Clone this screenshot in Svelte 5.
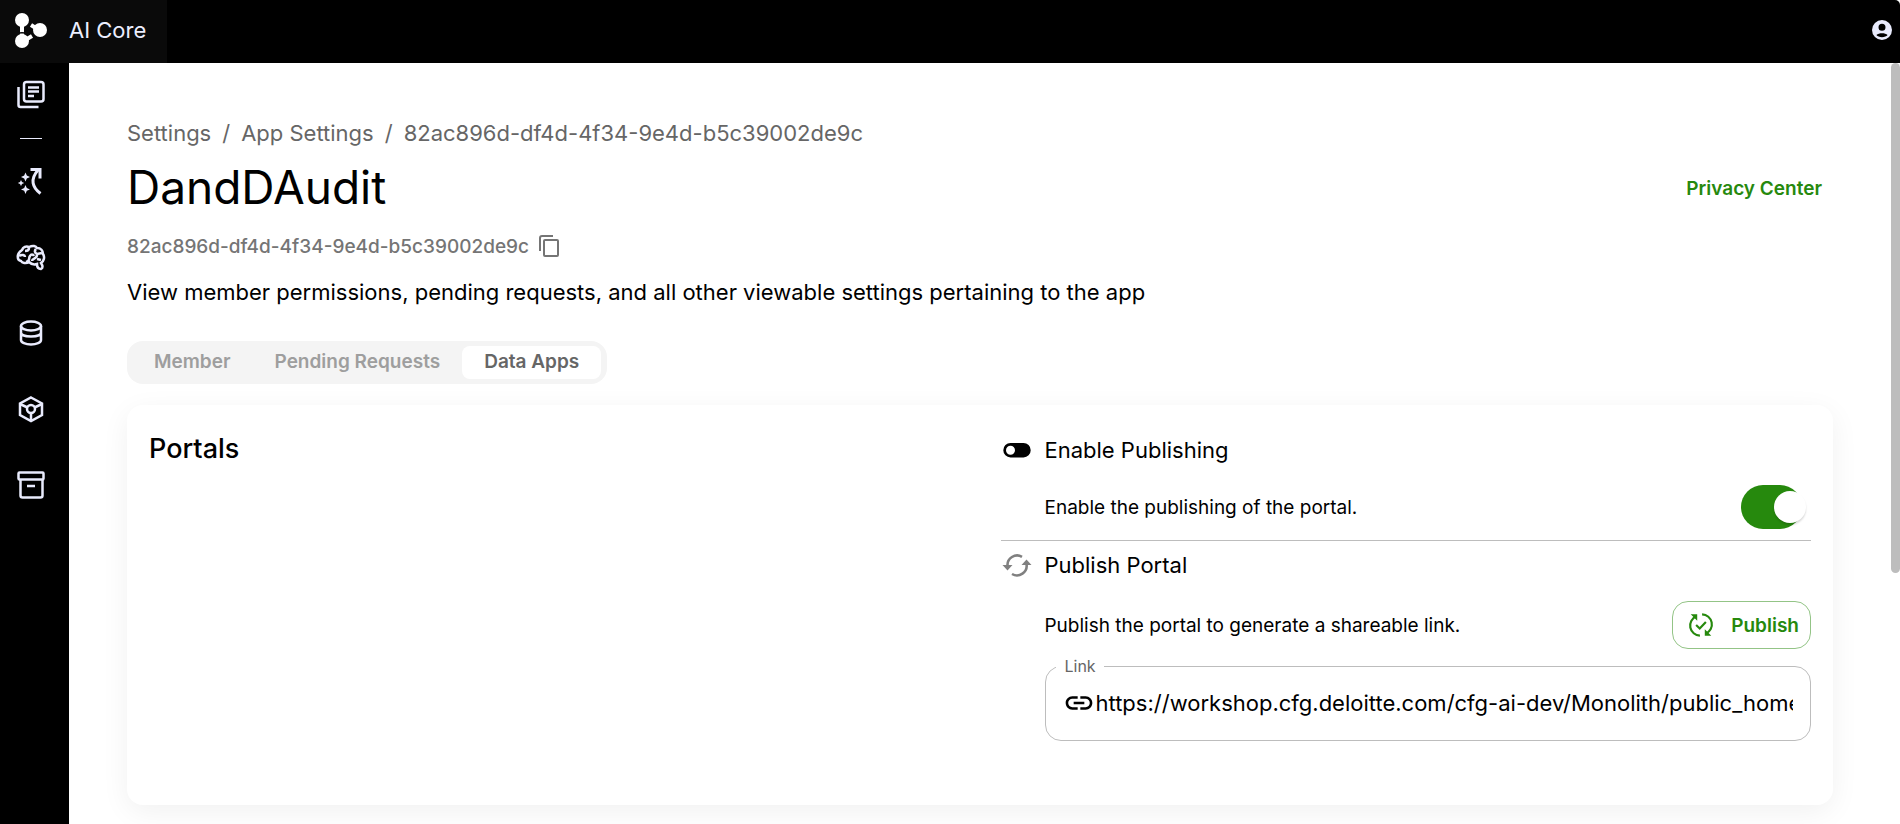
<script>
  let published = $state(true);
  let link = $state('https://workshop.cfg.deloitte.com/cfg-ai-dev/Monolith/public_home/82ac896d-df4d-4f34-9e4d-b5c39002de9c/portals/');
  let active = $state('Data Apps');
  const tabs = ['Member', 'Pending Requests', 'Data Apps'];
  const id = '82ac896d-df4d-4f34-9e4d-b5c39002de9c';
</script>

<div class="app">
  <header>
    <a class="brand" href="#home">
      <svg width="34" height="38" viewBox="0 0 34 38" fill="#fff" stroke="#fff">
        <g stroke-width="4"><path d="M9 9v12.500M9 22.500v6M9 31l10-6M18 14l8 5" /></g>
        <g stroke="none"><circle cx="9" cy="9" r="7" /><circle cx="27" cy="19" r="7" /><circle cx="9" cy="30" r="7" /></g>
        <path d="M3 22.500Q9 20.500 15 22.500" fill="none" stroke="#0a0a0a" stroke-width="1" />
      </svg>
      <span>AI Core</span>
    </a>
    <button class="account" aria-label="Account">
      <svg width="24" height="24" viewBox="0 0 24 24" fill="#e9ebfd">
        <path fill-rule="evenodd" d="M12 2a10 10 0 1 0 0 20 10 10 0 0 0 0-20zm0 3.800a3.500 3.500 0 1 1 0 7 3.500 3.500 0 0 1 0-7zm0 13.400c-2.500 0-4.400-.8-5.600-2.100 1.200-1.300 3.400-1.900 5.600-1.900s4.400.6 5.600 1.900c-1.200 1.300-3.100 2.100-5.600 2.100z" />
      </svg>
    </button>
  </header>

  <div class="body">
    <nav>
      <a class="first" href="#catalog" aria-label="Catalog">
        <svg width="32" height="32" viewBox="0 0 32 32">
          <rect x="9" y="3" width="19.500" height="19.500" rx="2.500" />
          <path d="M3.500 8v18a2 2 0 0 0 2 2H23.500M13 8.500h11M13 12.500h11M13 17h6" />
        </svg>
      </a>
      <hr />
      <a href="#build" aria-label="Build">
        <svg width="32" height="32" viewBox="0 0 32 32">
          <path d="M25.500 28.500c-8-6-11-14-2-24" stroke-width="3" />
          <path d="M15.500 4.500h9.500v9" stroke-width="3" />
          <path class="solid" d="M10.500 7.500l1.300 3L15 12l-3.200 1.400-1.300 3.200-1.300-3.200L6 12l3.200-1.500zM10.500 20l1.300 3 3.200 1.400-3.200 1.400-1.300 3.200-1.300-3.200L6 24.400 9.200 23zM6 15l1 2 2.200 1L7 19l-1 2-1-2-2.200-1L5 17z" />
        </svg>
      </a>
      <a href="#model" aria-label="Model">
        <svg width="32" height="32" viewBox="0 0 32 32">
          <path d="M7 9c1-3 4-4 7-3 4-2 7-1 8 1 4 0 6 3 6 6 2 3 1 7-2 9 2 3 2 5 0 6-3 0-4-2-4-5-3 1-6 0-8-2-3 2-7 1-8-1-4-1-5-7 1-11z" />
          <path d="M14 7c0 2-1 3-4 3M4 15c3-2 6-1 6 1m1 5c5-1 2-4 4-6 1-2 3-2 4 0M21 8c-2 2-1 4 1 5l5-1M17 20c0-3 5-2 5-6M22 18l4 1" />
        </svg>
      </a>
      <a href="#database" aria-label="Database">
        <svg width="32" height="32" viewBox="0 0 32 32">
          <ellipse cx="16" cy="9" rx="10" ry="4.500" />
          <path d="M6 9v14c0 2.500 4.500 4.500 10 4.500s10-2 10-4.500V9M6 15.500c0 2.500 4.500 4 10 4s10-1.500 10-4" />
        </svg>
      </a>
      <a href="#storage" aria-label="Storage">
        <svg width="32" height="32" viewBox="0 0 32 32">
          <path d="M16 4.500l11 6v11.500l-11 6-11-6V10.500z" />
          <circle cx="16" cy="16" r="4" />
          <path d="M5 11l7.500 3.500M27 11l-7.500 3.500M16 20v8" />
        </svg>
      </a>
      <a href="#archive" aria-label="Archive">
        <svg width="32" height="32" viewBox="0 0 32 32">
          <rect x="3.500" y="3.500" width="25" height="7" rx="1" />
          <path d="M5.500 11v15.500a2 2 0 0 0 2 2h18a2 2 0 0 0 2-2V11M12 17h8" />
        </svg>
      </a>
    </nav>

    <main>
      <ol class="crumbs">
        <li><a href="#settings">Settings</a></li>
        <li><a href="#apps">App Settings</a></li>
        <li><a href="#app">{id}</a></li>
      </ol>
      <div class="heading">
        <h1>DandDAudit</h1>
        <button class="privacy">Privacy Center</button>
      </div>
      <div class="appid">
        <span>{id}</span>
        <button aria-label="Copy id">
          <svg width="24" height="24" viewBox="0 0 24 24" fill="none" stroke="#757575" stroke-width="2">
            <path d="M3 17V4a2 2 0 0 1 2-2h11" /><rect x="7" y="6" width="14" height="16" rx="1" />
          </svg>
        </button>
      </div>
      <p class="about">View member permissions, pending requests, and all other viewable settings pertaining to the app</p>

      <div class="tabs" role="tablist">
        {#each tabs as tab}
          <button role="tab" aria-selected={active === tab} class:active={active === tab} onclick={() => (active = tab)}>{tab}</button>
        {/each}
      </div>

      <section class="card">
        <h2>Portals</h2>
        <div class="options">
          <div class="option">
            <svg width="32" height="32" viewBox="0 0 32 32">
              <path fill-rule="evenodd" d="M9.500 9h13a7.200 7.200 0 0 1 0 14.400h-13a7.200 7.200 0 0 1 0-14.400zm0 2.700a4.500 4.500 0 1 0 0 9 4.500 4.500 0 0 0 0-9z" />
            </svg>
            <h3>Enable Publishing</h3>
          </div>
          <div class="detail switch">
            <label for="enable">Enable the publishing of the portal.</label>
            <input id="enable" type="checkbox" bind:checked={published} />
          </div>
          <div class="option">
            <svg width="32" height="32" viewBox="0 0 32 32" fill="#808080">
              <path d="M6.500 17A9.700 9.700 0 0 1 21 7.800M25.500 15A9.700 9.700 0 0 1 11 25" fill="none" stroke="#808080" stroke-width="2.600" />
              <path d="M1.500 16h10l-5 5.500zM30.500 16h-10l5-5.500z" />
            </svg>
            <h3>Publish Portal</h3>
          </div>
          <div class="detail">
            <p>Publish the portal to generate a shareable link.</p>
            <button class="publish">
              <svg width="26" height="26" viewBox="0 0 24 24" fill="none" stroke="#26890d" stroke-width="2">
                <path d="M7.500 4A9.300 9.300 0 0 0 11 21.800M16.500 20A9.300 9.300 0 0 0 13 2.200M7.500 12l3.300 3.200 5.700-6" />
                <path d="M2.500 2h6v6zM21.500 22h-6v-6z" fill="#26890d" stroke="none" />
              </svg>
              Publish
            </button>
          </div>
          <fieldset>
            <legend><label for="link">Link</label></legend>
            <svg width="32" height="32" viewBox="0 0 24 24">
              <path d="M3.900 12c0-1.710 1.390-3.100 3.100-3.100h4V7H7c-2.760 0-5 2.240-5 5s2.240 5 5 5h4v-1.900H7c-1.710 0-3.100-1.390-3.100-3.100zM8 13h8v-2H8v2zm9-6h-4v1.900h4c1.710 0 3.100 1.390 3.100 3.100s-1.390 3.100-3.100 3.100h-4V17h4c2.760 0 5-2.240 5-5s-2.240-5-5-5z" />
            </svg>
            <input id="link" type="text" readonly value={link} />
          </fieldset>
        </div>
      </section>
    </main>
    <div class="scroll"><div class="thumb"></div></div>
  </div>
</div>

<style>
  :global(body) { margin: 0; background: #fff; }
  * { box-sizing: border-box; }
  .app {
    display: flex;
    flex-direction: column;
    height: 100vh;
    overflow: hidden;
    font-family: Inter, "Liberation Sans", sans-serif;
    font-size: 22px;
    color: #000;
  }
  h1, h2, h3, p, ol { margin: 0; padding: 0; font-weight: 400; }
  button { font-family: inherit; border: 0; background: none; padding: 0; cursor: pointer; }
  svg { display: block; flex: none; }
  a { color: inherit; text-decoration: none; }

  header {
    display: flex;
    flex: none;
    justify-content: space-between;
    align-items: center;
    height: 63px;
    padding-right: 6px;
    background: #000;
    border-top-right-radius: 5px;
  }
  .brand {
    display: flex;
    align-items: center;
    gap: 22px;
    height: 100%;
    padding: 0 21px 3px 13px;
    background: #0a0a0a;
    color: #ebeefe;
  }
  .account { padding-bottom: 3px; }

  .body { display: flex; flex: 1; min-height: 0; }
  nav {
    display: flex;
    flex: none;
    flex-direction: column;
    align-items: center;
    width: 69px;
    padding-right: 7px;
    background: #000;
  }
  nav a { display: flex; align-items: center; height: 76px; flex: none; }
  nav .first { height: 64px; }
  nav hr { width: 22px; height: 1px; margin: 11px 0 4px; border: 0; background: #e9ebfd; flex: none; }
  nav svg { fill: none; stroke: #e9ebfd; stroke-width: 2.5; }
  nav .solid { fill: #e9ebfd; stroke: none; }

  main { flex: 1; min-width: 0; overflow: hidden; padding: 54px 58px; }
  .crumbs { display: flex; list-style: none; line-height: 32px; color: #666; }
  .crumbs li + li::before { content: "/"; margin: 0 11px; }
  .heading { display: flex; justify-content: space-between; align-items: center; padding-right: 11px; }
  h1 { font-size: 46px; line-height: 76px; }
  .privacy { padding-top: 2px; font-size: 19px; font-weight: 600; color: #26890d; }
  .appid { display: flex; align-items: center; gap: 8px; height: 42px; font-size: 19px; font-weight: 500; color: #757575; }
  .about { margin-top: 9px; line-height: 32px; }

  .tabs {
    display: inline-flex;
    margin-top: 33px;
    padding: 5px 6px 5px 5px;
    border-radius: 16px;
    background: #f4f4f4;
  }
  .tabs button { height: 33px; padding: 0 22px 2px; border-radius: 8px; font-size: 19px; font-weight: 600; color: #9e9e9e; }
  .tabs .active { background: #fff; color: #666; }

  .card {
    display: grid;
    grid-template-columns: minmax(0, 853fr) minmax(0, 810fr);
    min-height: 400px;
    margin-top: 21px;
    padding: 21px 22px 22px;
    border-radius: 16px;
    box-shadow: 0 7px 29px rgba(0, 0, 0, 0.06);
  }
  h2 { font-size: 27px; font-weight: 500; line-height: 46px; }
  .option { display: flex; align-items: center; gap: 11px; height: 48px; }
  h3 { font-size: 22px; line-height: 32px; }
  .detail { display: flex; align-items: center; justify-content: space-between; padding-left: 43px; height: 72px; font-size: 19px; }
  .switch { height: 67px; border-bottom: 1px solid #bdbdbd; }
  .switch input {
    appearance: none;
    position: relative;
    width: 61px;
    height: 44px;
    margin: 0 9px 0 0;
    border-radius: 22px;
    background: #bdbdbd;
  }
  .switch input:checked { background: #26890d; }
  .switch input::before {
    content: "";
    position: absolute;
    top: 6px;
    left: 6px;
    width: 32px;
    height: 32px;
    border-radius: 50%;
    background: #fff;
    box-shadow: 0 2px 2px rgba(0, 0, 0, 0.15);
  }
  .switch input:checked::before { left: 33px; }
  .publish {
    display: flex;
    align-items: center;
    gap: 17px;
    height: 48px;
    padding: 0 11px 0 15px;
    border: 1px solid #93c486;
    border-radius: 16px;
    font-size: 19px;
    font-weight: 600;
    color: #26890d;
  }
  fieldset {
    display: flex;
    align-items: center;
    min-width: 0;
    height: 85px;
    margin: -5px 0 0 44px;
    padding: 0 17px 10px;
    border: 1px solid #bdbdbd;
    border-radius: 16px;
  }
  legend { margin-left: -7px; padding: 0 8px; font-size: 16px; line-height: 20px; color: #666; }
  fieldset input { flex: 1; min-width: 0; border: 0; padding: 0; outline: 0; background: none; font: inherit; color: inherit; }

  .scroll { flex: none; width: 9px; }
  .thumb { height: 67%; border-radius: 5px; background: #bdbdbd; }
</style>
